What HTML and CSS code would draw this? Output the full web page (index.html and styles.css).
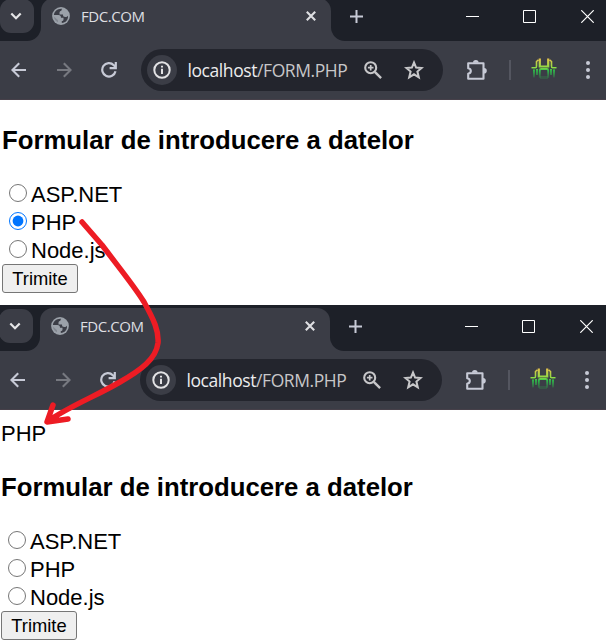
FILE: index.html
```
<!DOCTYPE html>
<html lang="ro">
<head>
<meta charset="utf-8">
<title>FDC.COM</title>
<link rel="stylesheet" href="styles.css">
</head>
<body>
<svg class="defs" width="0" height="0">
  <defs>
    <linearGradient id="glow" x1="0" y1="0" x2="0" y2="24" gradientUnits="userSpaceOnUse">
      <stop offset="0" stop-color="#ecc04b"/><stop offset=".4" stop-color="#8ddc44"/><stop offset=".52" stop-color="#2fbd4b"/><stop offset=".9" stop-color="#2fbd4b" stop-opacity="0"/>
    </linearGradient>
    <symbol id="chevron" viewBox="0 0 12 8"><path d="M1.300 1.500 6 6.200l4.700-4.700" fill="none" stroke="#e6e6e8" stroke-width="2.200"/></symbol>
    <symbol id="globe" viewBox="0 0 18 18"><circle cx="9" cy="9" r="8.900" fill="#9ba1a9"/><path d="M10.300 1.900C6 1.300 2.300 4.300 1.900 8H6.500C8.200 8 9 9 9 10.700H11.500V12.500C11.500 13.500 10.700 14 9.800 14V16.100C13.700 15.900 16.400 12.600 16 8.800C15.400 9.700 14.600 10 13.300 10C11.600 10 11 9.300 11 7.500H7.500V5.700C7.500 4.500 8.200 4 9.300 4C9.300 2.900 9.600 2.300 10.300 1.900Z" fill="#3b3d46"/><path d="M1.900 9.600 6 13.200V15.300C3.600 14.300 2.100 12.200 1.900 9.600Z" fill="#3b3d46" opacity=".25"/></symbol>
    <symbol id="tab-close" viewBox="0 0 10 10"><path d="m.8.8 8.400 8.400M9.200.8.8 9.200" stroke="#dedfe2" stroke-width="2.100"/></symbol>
    <symbol id="plus" viewBox="0 0 13 13"><path d="M6.500 0v13M0 6.500h13" stroke="#c7cad6" stroke-width="2"/></symbol>
    <symbol id="minimise" viewBox="0 0 13 13"><path d="M0 6.500h13" stroke="#fff"/></symbol>
    <symbol id="maximise" viewBox="0 0 13 13"><path d="M.5.5h12v12H.5Z" fill="none" stroke="#fff"/></symbol>
    <symbol id="close" viewBox="0 0 13 13"><path d="m.3.3 12.400 12.400M12.700.3.3 12.700" stroke="#fff" stroke-width="1.200"/></symbol>
    <symbol id="back" viewBox="0 0 16 16"><path d="M15 8H2M8.200 1.200 1.400 8l6.800 6.800" fill="none" stroke="currentColor" stroke-width="2.100"/></symbol>
    <symbol id="reload" viewBox="0 0 16 16"><path d="M14.500 9.200A6.700 6.700 0 1 1 12.800 3.200L14.600 5M14.800 0v6.100H8.600" fill="none" stroke="#c7cad6" stroke-width="2.200"/></symbol>
    <symbol id="info" viewBox="0 0 18 18"><circle cx="9" cy="9" r="7.700" fill="none" stroke="#e3e3e5" stroke-width="2"/><path d="M9 7.800v5.300M9 4.700v1.900" stroke="#e3e3e5" stroke-width="2"/></symbol>
    <symbol id="zoom" viewBox="0 0 18 18"><circle cx="6.700" cy="6.700" r="5.500" fill="none" stroke="#c7c7c9" stroke-width="2.100"/><path d="m10.800 10.800 6.300 6.300" stroke="#c7c7c9" stroke-width="2.400"/><path d="M6.700 3.900v5.600M3.900 6.700h5.600" stroke="#c7c7c9" stroke-width="1.700"/></symbol>
    <symbol id="star" viewBox="0 0 20 20"><path d="m10 2.500 2.100 5.100 5.500.4-4.200 3.600 1.400 5.800-4.800-3.100-4.800 3.100 1.400-5.800L2.400 8l5.500-.4Z" fill="none" stroke="#c7c7c9" stroke-width="2"/></symbol>
    <symbol id="puzzle" viewBox="0 0 22 22"><path d="M2.200 4.200h15.300v15.500H2.200v-5c3.500-1 3.500-4.700 0-5.500Z" fill="none" stroke="#c7cad6" stroke-width="2.100" stroke-linejoin="round"/><path d="M7 3.700a2.800 2.800 0 0 1 5.600 0ZM18 9a2.800 2.800 0 0 1 0 5.600Z" fill="#c7cad6"/></symbol>
    <symbol id="creature" viewBox="0 0 26 24"><g fill="none" stroke="url(#glow)"><path d="M.5 9.700H4.500Q5.500 9.700 5.500 8V3.500L7.500 1.800M25.500 9.700H21.500Q20.500 9.700 20.500 8V3.500L18.500 1.800" stroke-width="1.600"/><path d="M8.800.5V8.500H17.200V.5" stroke-width="2.200"/><path d="M3 11.500v8M6 11v6M20 11v6M23 11.500v8" stroke-width="1.800"/><path d="M8.800 20v-7.500Q8.800 11 10.300 11H15.700Q17.200 11 17.200 12.500V20" stroke-width="1.800"/></g><path d="M9 18h8v3H9Z" fill="#2fbd4b" opacity=".2"/></symbol>
    <symbol id="dots" viewBox="0 0 4 18"><g fill="#c7cad6"><circle cx="2" cy="2" r="2"/><circle cx="2" cy="9" r="2"/><circle cx="2" cy="16" r="2"/></g></symbol>
  </defs>
</svg>

<section class="window first">
  <header class="strip">
    <div class="corner"><span class="search"><svg width="12" height="8"><use href="#chevron"/></svg></span></div>
    <div class="tab"><svg width="18" height="18"><use href="#globe"/></svg><span class="title">FDC.COM</span><svg width="10" height="10"><use href="#tab-close"/></svg></div>
    <div class="rest"><svg width="13" height="13"><use href="#plus"/></svg><div class="controls"><svg width="13" height="13"><use href="#minimise"/></svg><svg width="13" height="13"><use href="#maximise"/></svg><svg width="13" height="13"><use href="#close"/></svg></div></div>
  </header>
  <nav class="toolbar">
    <div class="nav"><svg width="16" height="16"><use href="#back"/></svg><svg class="forward" width="16" height="16"><use href="#back"/></svg><svg width="16" height="16"><use href="#reload"/></svg></div>
    <div class="address"><span class="site"><svg width="18" height="18"><use href="#info"/></svg></span><span class="url">localhost<span class="path">/FORM.PHP</span></span><svg width="18" height="18"><use href="#zoom"/></svg><svg class="star" width="20" height="20"><use href="#star"/></svg></div>
    <div class="tools"><svg width="22" height="22"><use href="#puzzle"/></svg><span class="divider"></span><svg class="creature" width="26" height="24"><use href="#creature"/></svg><svg width="4" height="18"><use href="#dots"/></svg></div>
  </nav>
  <main class="page">
    <h3>Formular de introducere a datelor</h3>
    <form>
      <label><input type="radio" name="tech"><span>ASP.NET</span></label>
      <label><input type="radio" name="tech" checked><span>PHP</span></label>
      <label><input type="radio" name="tech"><span>Node.js</span></label>
      <button type="button">Trimite</button>
    </form>
  </main>
</section>

<section class="window second">
  <header class="strip">
    <div class="corner"><span class="search"><svg width="12" height="8"><use href="#chevron"/></svg></span></div>
    <div class="tab"><svg width="18" height="18"><use href="#globe"/></svg><span class="title">FDC.COM</span><svg width="10" height="10"><use href="#tab-close"/></svg></div>
    <div class="rest"><svg width="13" height="13"><use href="#plus"/></svg><div class="controls"><svg width="13" height="13"><use href="#minimise"/></svg><svg width="13" height="13"><use href="#maximise"/></svg><svg width="13" height="13"><use href="#close"/></svg></div></div>
  </header>
  <nav class="toolbar">
    <div class="nav"><svg width="16" height="16"><use href="#back"/></svg><svg class="forward" width="16" height="16"><use href="#back"/></svg><svg width="16" height="16"><use href="#reload"/></svg></div>
    <div class="address"><span class="site"><svg width="18" height="18"><use href="#info"/></svg></span><span class="url">localhost<span class="path">/FORM.PHP</span></span><svg width="18" height="18"><use href="#zoom"/></svg><svg class="star" width="20" height="20"><use href="#star"/></svg></div>
    <div class="tools"><svg width="22" height="22"><use href="#puzzle"/></svg><span class="divider"></span><svg class="creature" width="26" height="24"><use href="#creature"/></svg><svg width="4" height="18"><use href="#dots"/></svg></div>
  </nav>
  <main class="page">
    <p class="answer">PHP</p>
    <h3>Formular de introducere a datelor</h3>
    <form>
      <label><input type="radio" name="tech"><span>ASP.NET</span></label>
      <label><input type="radio" name="tech"><span>PHP</span></label>
      <label><input type="radio" name="tech"><span>Node.js</span></label>
      <button type="button">Trimite</button>
    </form>
  </main>
</section>

<svg class="arrow" width="606" height="642" viewBox="0 0 606 642"><path d="M82 222 102 245C117 265 135 287 144 302C154 320 159 331 158 343C156 359 141 370 120 382C98 395 70 406 48 421M53 405 47 422 68 419"/></svg>
</body>
</html>
```

FILE: styles.css
```
* { box-sizing: border-box; }
body {
  margin: 0;
  width: 606px;
  height: 642px;
  overflow: hidden;
  background: #fff;
  font-family: "Liberation Sans", Arial, sans-serif;
}
svg { display: block; flex: none; }
.defs { position: absolute; }
.window { width: 607px; overflow: hidden; }
.first { height: 305px; }
.second { height: 337px; margin-left: -1px; }

.strip {
  display: flex;
  align-items: flex-end;
  height: 46px;
  background: #3b3d46;
}
.first .strip { margin-top: -5px; }
.corner {
  width: 41px;
  height: 46px;
  padding-top: 4px;
  background: #1d2028;
  border-bottom-right-radius: 14px;
}
.search {
  display: flex;
  align-items: center;
  justify-content: flex-end;
  width: 34px;
  height: 34px;
  padding-right: 12px;
  border-radius: 11px;
  background: #3b3d46;
}
.tab {
  display: flex;
  align-items: center;
  width: 290px;
  height: 46px;
  padding: 0 15px 5px 11px;
  background: linear-gradient(#1d2028, #1d2028) top / 100% 20px no-repeat;
  position: relative;
  z-index: 0;
}
.tab::before {
  content: "";
  position: absolute;
  inset: 3px 0 0;
  z-index: -1;
  border-radius: 13px 13px 0 0;
  background: #3b3d46;
}
.tab svg { margin-top: 1px; }
.title {
  flex: 1;
  margin-left: 11px;
  color: #dedfe2;
  font: 15px/20px "Open Sans", sans-serif;
  letter-spacing: -0.45px;
}
.rest {
  display: flex;
  align-items: center;
  justify-content: space-between;
  flex: 1;
  height: 46px;
  padding: 0 13px 4px 19px;
  background: #1d2028;
  border-bottom-left-radius: 14px;
}
.controls { display: flex; gap: 44px; padding-top: 1px; }
.controls svg:last-child { margin-left: 1px; }

.toolbar {
  display: flex;
  align-items: center;
  height: 59px;
  background: #3b3d46;
  border-bottom: 1px solid #464049;
}
.nav { display: flex; gap: 29px; width: 141px; padding-left: 11px; color: #c7cad6; }
.forward { transform: scaleX(-1); color: #777980; }
.address {
  display: flex;
  align-items: center;
  width: 302px;
  height: 42px;
  padding-left: 6px;
  border-radius: 21px;
  background: #23252d;
}
.site {
  display: grid;
  place-items: center;
  width: 30px;
  height: 30px;
  border-radius: 50%;
  background: #3b3d46;
}
.url {
  width: 177px;
  padding-left: 10.500px;
  width: 187px;
  color: #ececee;
  font: 17.5px/24px "Open Sans", sans-serif;
  letter-spacing: -0.42px;
  white-space: nowrap;
}
.path { color: #c7c7c9; }
.star { margin-left: 22px; }
.tools { display: flex; align-items: center; margin-left: 23px; }
.divider { width: 2px; height: 20px; margin: 0 20px 0 21px; background: #545660; }
.creature { margin-right: 29px; }

.page { padding: 26px 2px 0; font-size: 22px; color: #000; }
.second .page { padding-top: 11px; }
.answer { margin: 0 0 26px; line-height: 26px; }
h3 { margin: 0 0 26px; font-size: 25.74px; line-height: 28px; white-space: nowrap; }
form { display: flex; flex-direction: column; align-items: flex-start; }
label { display: flex; align-items: center; height: 28px; line-height: 28px; }
label span { padding-top: 2px; }
input { width: 18px; height: 18px; margin: 0 4px 2px 7px; }
button {
  width: 76px;
  height: 29px;
  padding: 0;
  border: 1px solid #767676;
  border-radius: 3px;
  background: #efefef;
  color: #000;
  font: 18.33px/26px "Liberation Sans", Arial, sans-serif;
}
.arrow { position: absolute; left: 0; top: 0; pointer-events: none; }
.arrow path { fill: none; stroke: #ed1c24; stroke-width: 5.500; stroke-linecap: round; stroke-linejoin: round; }
```
